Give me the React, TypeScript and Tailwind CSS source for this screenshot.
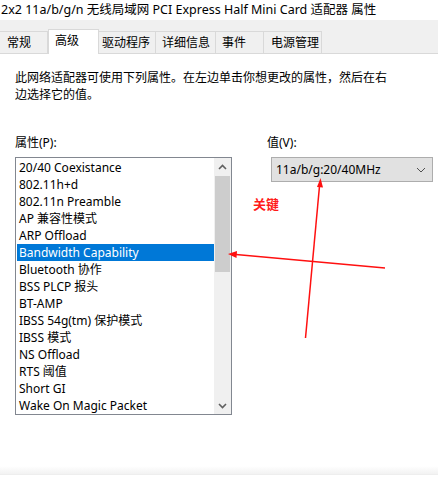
import React from "react";

const tabs = [
  { label: "常规", w: "w-[48px]", pl: "pl-[7px]" },
  { label: "高级", w: "w-[51px]", pl: "pl-[6px]", active: true },
  { label: "驱动程序", w: "w-[57px]", pl: "pl-[3px]" },
  { label: "详细信息", w: "w-[60px]", pl: "pl-[6px]" },
  { label: "事件", w: "w-[48px]", pl: "pl-[6px]" },
  { label: "电源管理", w: "w-[58px]", pl: "pl-[7px]" },
];

const items = [
  "20/40 Coexistance",
  "802.11h+d",
  "802.11n Preamble",
  "AP 兼容性模式",
  "ARP Offload",
  "Bandwidth Capability",
  "Bluetooth 协作",
  "BSS PLCP 报头",
  "BT-AMP",
  "IBSS 54g(tm) 保护模式",
  "IBSS 模式",
  "NS Offload",
  "RTS 阈值",
  "Short GI",
  "Wake On Magic Packet",
];

const selected = "Bandwidth Capability";

function Chevron({ up }: { up?: boolean }) {
  return (
    <svg width="9" height="6" viewBox="0 0 9 6">
      <path
        d={up ? "M1 5 L4.5 1.5 L8 5" : "M1 1 L4.5 4.5 L8 1"}
        fill="none"
        stroke="#606060"
        strokeWidth="1.6"
      />
    </svg>
  );
}

export default function App() {
  return (
    <div
      className="relative w-[438px] h-[489px] bg-white overflow-hidden flex flex-col text-black"
      style={{ fontFamily: '"Noto Sans", "Noto Sans CJK SC", sans-serif' }}
    >
      {/* title */}
      <div className="h-[20px] text-[12.5px] leading-[20px] whitespace-nowrap pl-[1px]">
        2x2 11a/b/g/n 无线局域网 PCI Express Half Mini Card 适配器 属性
      </div>

      {/* tab strip */}
      <div className="h-[34px] bg-[#f0f0f0] flex items-end">
        {tabs.map((t) =>
          t.active ? (
            <div
              key={t.label}
              className={`${t.w} ${t.pl} h-[25px] bg-white border-t border-l border-r border-[#d9d9d9] pt-[2px] text-[12px] leading-[17px]`}
            >
              {t.label}
            </div>
          ) : (
            <div
              key={t.label}
              className={`${t.w} ${t.pl} h-[23px] border-t border-r border-b border-[#d9d9d9] flex items-center text-[12px]`}
            >
              {t.label}
            </div>
          )
        )}
        <div className="flex-1 h-px bg-[#d9d9d9]" />
      </div>

      {/* panel */}
      <div className="h-[412px] pl-[15px] pt-[15px] text-[12px]">
        <p className="leading-[17px]">
          此网络适配器可使用下列属性。在左边单击你想更改的属性，然后在右
          <br />
          边选择它的值。
        </p>

        <div className="mt-[31px] flex">
          <div className="w-[252px] shrink-0">
            <div className="leading-[17px]">属性(P):</div>
            <div className="mt-[6px] w-[217px] h-[258px] border border-[#828790] flex">
              <div className="flex-1 pl-px pt-px">
                {items.map((it) => (
                  <div
                    key={it}
                    className={`h-[17px] leading-[17px] pl-[2px] whitespace-nowrap ${
                      it === selected ? "bg-[#0078d7] text-white" : ""
                    }`}
                  >
                    {it}
                  </div>
                ))}
              </div>
              <div className="w-[17px] bg-[#f0f0f0] flex flex-col">
                <div className="h-[17px] flex items-center justify-center">
                  <Chevron up />
                </div>
                <div className="mx-px mt-px h-[96px] bg-[#cdcdcd]" />
                <div className="flex-1" />
                <div className="h-[17px] flex items-center justify-center">
                  <Chevron />
                </div>
              </div>
            </div>
          </div>

          <div className="shrink-0">
            <div className="leading-[17px]">值(V):</div>
            <div className="mt-[6px] ml-[4px] w-[162px] h-[25px] bg-[#e1e1e1] border border-[#adadad] flex items-center justify-between pl-[4px] pr-[6px]">
              <span>11a/b/g:20/40MHz</span>
              <svg width="10" height="6" viewBox="0 0 10 6">
                <path d="M1 1 L5 5 L9 1" fill="none" stroke="#505050" strokeWidth="1" />
              </svg>
            </div>
          </div>
        </div>
      </div>

      <div className="h-[9px] bg-gradient-to-b from-white to-[#f2f2f2] border-b border-[#eeeeee]" />
      <div className="flex-1 bg-white" />

      {/* red annotations */}
      <div
        className="absolute left-[253px] top-[195px] text-[13px] leading-[17px] font-bold text-[#ff1a1a]"
        style={{ fontFamily: '"Noto Sans CJK SC", sans-serif' }}
      >
        关键
      </div>
      <svg className="absolute inset-0 pointer-events-none" width="438" height="489">
        <line x1="236" y1="254.5" x2="385" y2="268" stroke="#ff1010" strokeWidth="1.5" />
        <path d="M228 254 L237 251 L236.5 258 Z" fill="#ff1010" />
        <line x1="319.5" y1="186" x2="305.5" y2="338" stroke="#ff1010" strokeWidth="1.5" />
        <path d="M320.5 178 L317 187 L323 187.5 Z" fill="#ff1010" />
      </svg>
    </div>
  );
}
